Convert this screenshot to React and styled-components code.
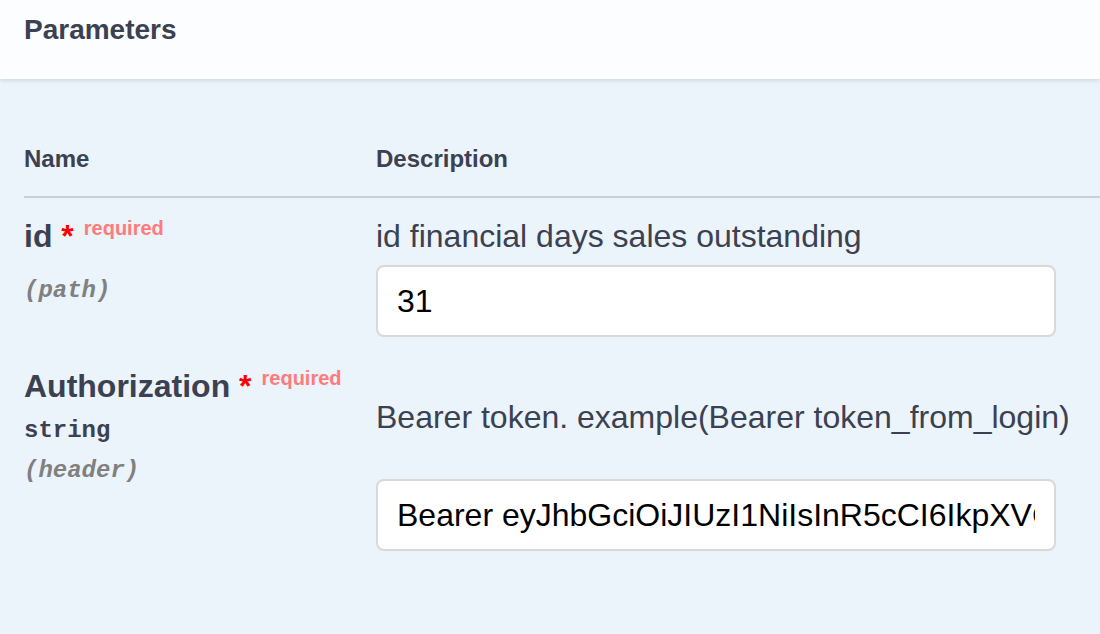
import React from 'react'
import styled, { createGlobalStyle } from 'styled-components'

const GlobalStyle = createGlobalStyle`
    html, body {
        margin: 0;
        padding: 0;
        background: #ebf3fb;
        font-family: "Liberation Sans", Arial, sans-serif;
        color: #3b4151;
    }
`

const Section = styled.div`
    width: 1100px;
    height: 634px;
    background: #ebf3fb;
    overflow: hidden;
`

const SectionHeader = styled.div`
    position: relative;
    z-index: 1;
    background: #fbfdfe;
    box-shadow: 0 2px 4px rgba(0, 0, 0, 0.1);
    padding: 14px 24px 33px;
`

const Title = styled.h4`
    margin: 0;
    font-size: 28px;
    line-height: 32px;
    font-weight: 700;
    color: #3b4151;
`

const Table = styled.div`
    padding: 66px 0 0 24px;
`

const HeadRow = styled.div`
    display: grid;
    grid-template-columns: 352px 1fr;
    padding-bottom: 23px;
    border-bottom: 2px solid rgba(59, 65, 81, 0.2);
`

const HeadCell = styled.div`
    font-size: 24px;
    line-height: 28px;
    font-weight: 700;
`

const Row = styled.div`
    display: grid;
    grid-template-columns: 352px 1fr;
    padding: 18px 0 11px;
`

const ParamName = styled.div`
    font-size: 32px;
    line-height: 40px;
    font-weight: 700;
`

const Asterisk = styled.span`
    color: #ff0000;
`

const Required = styled.span`
    position: relative;
    top: -12px;
    padding: 0 10px;
    font-size: 20px;
    color: #ff7b7b;
`

const ParamType = styled.div`
    padding: 6px 0 10px;
    font-family: "Liberation Mono", "Courier New", monospace;
    font-size: 24px;
    line-height: 30px;
    font-weight: 700;
    &:empty {
        line-height: 0;
    }
`

const ParamIn = styled.div`
    font-family: "Liberation Mono", "Courier New", monospace;
    font-size: 24px;
    line-height: 30px;
    font-weight: 700;
    font-style: italic;
    color: #808080;
`

const Description = styled.p`
    margin: ${p => p.$offset || 0}px 0 0;
    font-size: 32px;
    line-height: 40px;
    color: #3b4151;
`

const Input = styled.input`
    display: block;
    box-sizing: border-box;
    width: 680px;
    height: 72px;
    margin-top: ${p => p.$gap}px;
    padding: 0 19px;
    border: 2px solid #d9d9d9;
    border-radius: 8px;
    background: #fff;
    font-family: "Liberation Sans", Arial, sans-serif;
    font-size: 32px;
    color: #000;
    outline: none;
`

const params = [
    {
        name: 'id',
        type: '',
        in: 'path',
        description: 'id financial days sales outstanding',
        value: '31',
        descOffset: 0,
        inputGap: 9,
    },
    {
        name: 'Authorization',
        type: 'string',
        in: 'header',
        description: 'Bearer token. example(Bearer token_from_login)',
        value: 'Bearer eyJhbGciOiJIUzI1NiIsInR5cCI6IkpXVCJ9.eyJzdWIiOiIxMjM0NTY3ODkwIn0',
        descOffset: 31,
        inputGap: 42,
    },
]

export default function App() {
    return (
        <>
            <GlobalStyle/>
            <Section>
                <SectionHeader>
                    <Title>Parameters</Title>
                </SectionHeader>
                <Table>
                    <HeadRow>
                        <HeadCell>Name</HeadCell>
                        <HeadCell>Description</HeadCell>
                    </HeadRow>
                    {params.map(p => (
                        <Row key={p.name}>
                            <div>
                                <ParamName>
                                    {p.name}<Asterisk>&nbsp;*</Asterisk><Required>required</Required>
                                </ParamName>
                                <ParamType>{p.type}</ParamType>
                                <ParamIn>({p.in})</ParamIn>
                            </div>
                            <div>
                                <Description $offset={p.descOffset}>{p.description}</Description>
                                <Input $gap={p.inputGap} defaultValue={p.value} readOnly/>
                            </div>
                        </Row>
                    ))}
                </Table>
            </Section>
        </>
    )
}
